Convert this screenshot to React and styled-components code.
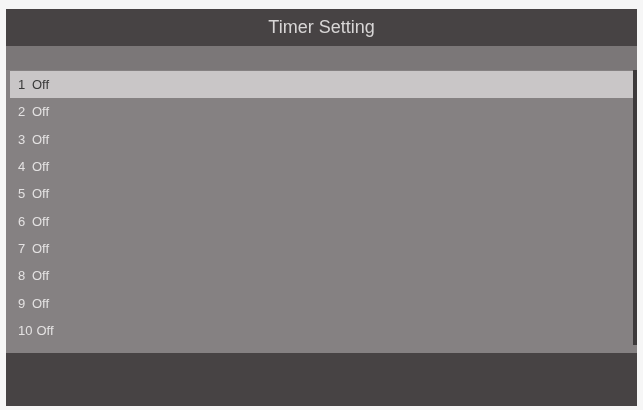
import React from "react";
import styled, { createGlobalStyle } from "styled-components";

const GlobalStyle = createGlobalStyle`
  html, body {
    margin: 0;
    padding: 0;
    background: #f6f6f6;
  }
  body {
    font-family: "Liberation Sans", Arial, sans-serif;
  }
`;

const Page = styled.div`
  width: 643px;
  height: 410px;
  padding: 9px 6px 4px 6px;
  box-sizing: border-box;
`;

const Screen = styled.div`
  width: 631px;
  height: 397px;
  display: flex;
  flex-direction: column;
  background: #858182;
  filter: blur(0.35px);
`;

const Header = styled.header`
  height: 37px;
  flex: none;
  background: #474344;
  color: #d8d6d6;
  font-size: 18px;
  display: flex;
  align-items: center;
  justify-content: center;
`;

const SubBar = styled.div`
  height: 24px;
  flex: none;
  background: #7b7778;
`;

const Body = styled.div`
  flex: 1;
  display: flex;
  padding-left: 4px;
`;

const List = styled.ul`
  flex: 1;
  list-style: none;
  margin: 0;
  padding: 1px 0 0 0;
`;

const Row = styled.li`
  height: 27.3px;
  display: flex;
  align-items: center;
  gap: 4px;
  padding-left: 8px;
  font-size: 13px;
  color: ${(p) => (p.$active ? "#3a3a3a" : "#e4e2e2")};
  background: ${(p) => (p.$active ? "#c9c6c7" : "transparent")};
`;

const Num = styled.span`
  min-width: 10px;
`;

const Scroll = styled.div`
  width: 4px;
  flex: none;
  align-self: flex-start;
  height: 275px;
  background: #3d3a3b;
`;

const Footer = styled.footer`
  height: 53px;
  flex: none;
  background: #474344;
`;

const timers = Array.from({ length: 10 }, (_, i) => ({ id: i + 1, state: "Off" }));

export default function App() {
  return (
    <Page>
      <GlobalStyle />
      <Screen>
        <Header>Timer Setting</Header>
        <SubBar />
        <Body>
          <List>
            {timers.map((t) => (
              <Row key={t.id} $active={t.id === 1}>
                <Num>{t.id}</Num>
                {t.state}
              </Row>
            ))}
          </List>
          <Scroll />
        </Body>
        <Footer />
      </Screen>
    </Page>
  );
}
